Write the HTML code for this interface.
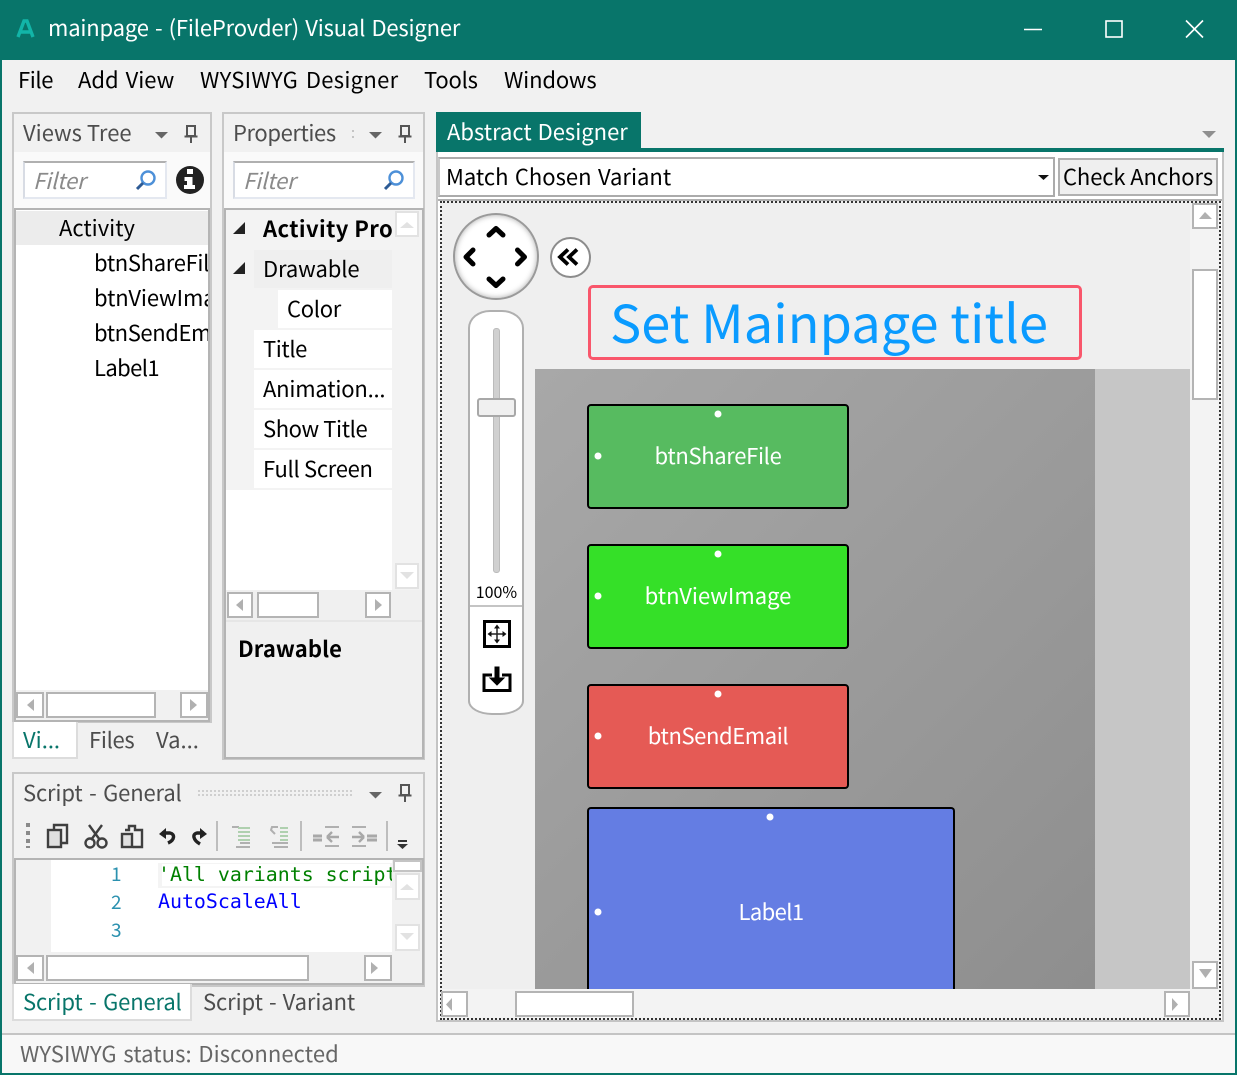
<!DOCTYPE html>
<html><head><meta charset="utf-8"><style>
html,body{margin:0;padding:0}
body{width:1237px;height:1075px;overflow:hidden;position:relative;background:#f1f1f1;font-family:"Noto Sans CJK SC","Liberation Sans",sans-serif;font-size:22px;color:#000}
div{position:absolute;box-sizing:border-box}
.t{white-space:nowrap;line-height:30px;height:30px}
.g{color:#4d4d4d}
.sb{background:#fff;border:2px solid #b4b4b4}
.fb{background:#fff;border:2px solid #e2e2e2}
svg{position:absolute;left:0;top:0}
</style></head><body>
<div style="left:0;top:0;width:1237px;height:60px;background:#08756a"></div>
<div style="left:0;top:60px;width:2px;height:1015px;background:#08756a"></div>
<div style="left:1235px;top:60px;width:2px;height:1015px;background:#08756a"></div>
<div style="left:0;top:1073px;width:1237px;height:2px;background:#08756a"></div>
<div class="t" style="left:48px;top:12px;color:#fff;font-size:22px;letter-spacing:-.18px;word-spacing:1.500px">mainpage - (FileProvder) Visual Designer</div>

<div class="t" style="left:18px;top:64px;letter-spacing:-.4px">File</div>
<div class="t" style="left:78px;top:64px;word-spacing:2px">Add View</div>
<div class="t" style="left:200px;top:64px;letter-spacing:.3px;word-spacing:2.500px">WYSIWYG Designer</div>
<div class="t" style="left:424px;top:64px;letter-spacing:-.2px">Tools</div>
<div class="t" style="left:504px;top:64px;letter-spacing:-.15px">Windows</div>

<!-- Views tree -->
<div style="left:12px;top:112px;width:200px;height:611px;border:2px solid #c8c8c8;background:#f1f1f1"></div>
<div style="left:14px;top:152px;width:196px;height:56px;background:#fafafa"></div>
<div class="t g" style="left:23px;top:117px">Views Tree</div>
<div style="left:23px;top:161px;width:144px;height:38px;background:#fff;border:2px solid #e4e8f0;border-top-color:#b0b0b0;border-left-color:#d8dce4"></div>
<div class="t" style="left:33px;top:165px;color:#8a8a8a;font-style:italic;letter-spacing:-.15px">Filter</div>
<div style="left:14px;top:208px;width:196px;height:514px;border:2px solid #b4b4b4;background:#fff"></div>
<div style="left:16px;top:211px;width:192px;height:34px;background:#ececec"></div>
<div class="t" style="left:59px;top:212px">Activity</div>
<div style="left:16px;top:245px;width:192px;height:140px;overflow:hidden">
<div class="t" style="left:78px;top:2px;letter-spacing:-.33px">btnShareFile</div>
<div class="t" style="left:78px;top:37px;letter-spacing:-.1px">btnViewImage</div>
<div class="t" style="left:78px;top:72px;letter-spacing:-.4px">btnSendEmail</div>
<div class="t" style="left:78px;top:107px;letter-spacing:-.6px">Label1</div>
</div>
<div style="left:16px;top:690px;width:192px;height:30px;background:#f1f1f1"></div>
<div class="sb" style="left:16px;top:692px;width:28px;height:26px"></div>
<div class="sb" style="left:46px;top:692px;width:110px;height:26px"></div>
<div class="sb" style="left:180px;top:692px;width:28px;height:26px"></div>
<div style="left:12px;top:722px;width:66px;height:37px;background:#fff;border:2px solid #dcdcdc;border-top:0"></div>
<div class="t" style="left:23px;top:724px;color:#08756a">Vi...</div>
<div class="t g" style="left:89px;top:724px;letter-spacing:-.3px">Files</div>
<div class="t g" style="left:156px;top:724px">Va...</div>

<!-- Properties -->
<div style="left:222px;top:112px;width:203px;height:648px;border:2px solid #c8c8c8;background:#f1f1f1"></div>
<div style="left:224px;top:152px;width:199px;height:56px;background:#fafafa"></div>
<div class="t g" style="left:233px;top:117px;letter-spacing:-.4px">Properties</div>
<div style="left:233px;top:161px;width:182px;height:38px;background:#fff;border:2px solid #e4e8f0;border-top-color:#b0b0b0;border-left-color:#d8dce4"></div>
<div class="t" style="left:243px;top:165px;color:#8a8a8a;font-style:italic;letter-spacing:-.15px">Filter</div>
<div style="left:224px;top:208px;width:200px;height:551px;border:2px solid #b4b4b4;background:#f0f0f0"></div>
<div style="left:226px;top:210px;width:196px;height:380px;background:#f3f3f3"></div>
<div style="left:226px;top:490px;width:166px;height:100px;background:#fff"></div>
<div class="t" style="left:263px;top:213px;width:129px;overflow:hidden;font-weight:bold;letter-spacing:.4px">Activity Pro</div>
<div style="left:254px;top:250px;width:138px;height:38px;background:#efefef"></div>
<div class="t" style="left:263px;top:253px;letter-spacing:-.1px">Drawable</div>
<div style="left:278px;top:290px;width:114px;height:38px;background:#fff"></div>
<div class="t" style="left:287px;top:293px;letter-spacing:-.3px">Color</div>
<div style="left:254px;top:330px;width:138px;height:38px;background:#fff"></div>
<div class="t" style="left:263px;top:333px;letter-spacing:-.4px">Title</div>
<div style="left:254px;top:370px;width:138px;height:38px;background:#fff"></div>
<div class="t" style="left:263px;top:373px;letter-spacing:-.2px">Animation...</div>
<div style="left:254px;top:410px;width:138px;height:38px;background:#fff"></div>
<div class="t" style="left:263px;top:413px;letter-spacing:-.4px">Show Title</div>
<div style="left:254px;top:450px;width:138px;height:38px;background:#fff"></div>
<div class="t" style="left:263px;top:453px;letter-spacing:-.3px">Full Screen</div>
<div class="fb" style="left:395px;top:211px;width:24px;height:26px"></div>
<div class="fb" style="left:395px;top:563px;width:24px;height:26px"></div>
<div class="sb" style="left:227px;top:592px;width:26px;height:26px"></div>
<div class="sb" style="left:257px;top:592px;width:62px;height:26px"></div>
<div class="sb" style="left:365px;top:592px;width:26px;height:26px"></div>
<div style="left:226px;top:620px;width:196px;height:2px;background:#e6e6e6"></div>
<div class="t" style="left:238px;top:633px;font-weight:bold;letter-spacing:.1px">Drawable</div>

<!-- Script -->
<div style="left:12px;top:772px;width:413px;height:215px;border:2px solid #c8c8c8;background:#f1f1f1"></div>
<div class="t g" style="left:23px;top:777px;letter-spacing:-.15px;word-spacing:1.800px">Script - General</div>
<div style="left:197px;top:789px;width:157px;height:8px;background-image:radial-gradient(#c4c4c4 0.8px,transparent 1px);background-size:4px 4px"></div>
<div style="left:14px;top:858px;width:410px;height:127px;border:2px solid #b4b4b4;background:#f1f1f1"></div>
<div style="left:51px;top:860px;width:341px;height:92px;background:#fff"></div>
<div style="left:158px;top:863px;width:234px;height:25px;background:#f4f4f4"></div>
<div style="left:162px;top:864px;width:228px;height:22px;background:#fff"></div>
<div class="t" style="left:111px;top:859px;font-size:19px;color:#2b91af">1</div>
<div class="t" style="left:111px;top:887px;font-size:19px;color:#2b91af">2</div>
<div class="t" style="left:111px;top:915px;font-size:19px;color:#2b91af">3</div>
<div class="t" style="left:158px;top:861px;width:234px;overflow:hidden;font-family:'DejaVu Sans Mono',monospace;font-size:19.9px;color:#008000;line-height:28px">'All variants script</div>
<div class="t" style="left:158px;top:888px;font-family:'DejaVu Sans Mono',monospace;font-size:19.9px;color:#0000ff;line-height:28px">AutoScaleAll</div>
<div class="sb" style="left:393px;top:860px;width:29px;height:12px;border-color:#c4c4c4"></div>
<div class="fb" style="left:395px;top:873px;width:25px;height:27px"></div>
<div class="fb" style="left:395px;top:924px;width:25px;height:27px"></div>
<div class="sb" style="left:16px;top:955px;width:28px;height:26px"></div>
<div class="sb" style="left:46px;top:955px;width:263px;height:26px"></div>
<div class="sb" style="left:364px;top:955px;width:28px;height:26px"></div>
<div style="left:12px;top:984px;width:180px;height:37px;background:#fff;border:2px solid #dcdcdc;border-top:0"></div>
<div class="t" style="left:23px;top:986px;color:#08756a;letter-spacing:-.15px;word-spacing:1.800px">Script - General</div>
<div class="t g" style="left:203px;top:986px;letter-spacing:-.1px;word-spacing:1.300px">Script - Variant</div>

<!-- Status -->
<div style="left:2px;top:1033px;width:1233px;height:40px;background:#f8f8f8;border-top:2px solid #c4c4c4"></div>
<div class="t" style="left:20px;top:1038px;color:#666;letter-spacing:.1px;word-spacing:1.600px">WYSIWYG status: Disconnected</div>

<!-- Designer -->
<div style="left:436px;top:112px;width:205px;height:40px;background:#08756a"></div>
<div style="left:436px;top:148px;width:788px;height:4px;background:#08756a"></div>
<div class="t" style="left:447px;top:116px;color:#fff;word-spacing:1px">Abstract Designer</div>
<div style="left:436px;top:152px;width:788px;height:870px;background:#fff;border:2px solid #c4c4c4;border-top:0"></div>
<div style="left:438px;top:157px;width:617px;height:40px;background:#fff;border:2px solid #ababab;border-left-color:#c8c8c8"></div>
<div class="t" style="left:446px;top:161px;word-spacing:1.500px">Match Chosen Variant</div>
<div style="left:1058px;top:158px;width:160px;height:38px;background:#efefef;border:2px solid #b0b0b0"></div>
<div class="t" style="left:1063px;top:161px;letter-spacing:-.1px">Check Anchors</div>
<div style="left:438px;top:199px;width:784px;height:2px;background:#b0b0b0"></div>
<div style="left:440px;top:201px;width:781px;height:819px;background:#efefef;border:2px dotted #333"></div>
<div style="left:1190px;top:203px;width:29px;height:786px;background:#f3f3f3"></div>
<div style="left:442px;top:989px;width:777px;height:29px;background:#f3f3f3"></div>
<div class="sb" style="left:1192px;top:203px;width:26px;height:26px"></div>
<div class="sb" style="left:1192px;top:269px;width:26px;height:131px"></div>
<div class="sb" style="left:1192px;top:961px;width:26px;height:28px"></div>
<div class="sb" style="left:441px;top:991px;width:27px;height:26px"></div>
<div class="sb" style="left:515px;top:991px;width:119px;height:26px"></div>
<div class="sb" style="left:1164px;top:991px;width:26px;height:26px"></div>

<div style="left:588px;top:285px;width:494px;height:75px;border:3px solid #f9566b;border-radius:5px"></div>
<div class="t" style="left:610px;top:286px;height:70px;line-height:70px;font-size:52.400px;color:#0a9bff">Set Mainpage title</div>

<div style="left:535px;top:369px;width:655px;height:620px;background:#c6c6c6"></div>
<div style="left:535px;top:369px;width:560px;height:620px;background:linear-gradient(135deg,#a8a8a8,#8e8e8e)"></div>
<div style="left:587px;top:404px;width:262px;height:105px;background:#57bb60;border:2px solid #000;border-radius:4px"></div>
<div style="left:587px;top:544px;width:262px;height:105px;background:#35e028;border:2px solid #000;border-radius:4px"></div>
<div style="left:587px;top:684px;width:262px;height:105px;background:#e55a55;border:2px solid #000;border-radius:4px"></div>
<div style="left:587px;top:807px;width:368px;height:182px;background:#647de3;border:2px solid #000;border-bottom:0;border-radius:4px 4px 0 0"></div>
<div class="t" style="left:587px;top:440px;width:262px;text-align:center;color:#fff;letter-spacing:-.33px">btnShareFile</div>
<div class="t" style="left:587px;top:580px;width:262px;text-align:center;color:#fff">btnViewImage</div>
<div class="t" style="left:587px;top:720px;width:262px;text-align:center;color:#fff;letter-spacing:-.4px">btnSendEmail</div>
<div class="t" style="left:587px;top:896px;width:368px;text-align:center;color:#fff;letter-spacing:-.6px">Label1</div>

<div style="left:453px;top:213px;width:86px;height:87px;border-radius:50%;background:#fff;border:2px solid #9a9a9a;box-shadow:inset 0 0 6px #aaa"></div>
<div style="left:550px;top:237px;width:41px;height:41px;border-radius:50%;background:#fff;border:2px solid #8c8c8c"></div>
<div style="left:468px;top:310px;width:56px;height:405px;background:#fff;border:2px solid #b0b0b0;border-radius:22px 22px 24px 24px / 18px 18px 14px 14px"></div>
<div style="left:493px;top:328px;width:7px;height:245px;background:#d0d0d0;border:1px solid #bbb;border-radius:3px"></div>
<div style="left:477px;top:398px;width:39px;height:19px;background:#f0f0f0;border:2px solid #a8a8a8;border-radius:3px"></div>
<div style="left:470px;top:605px;width:52px;height:2px;background:#c4c4c4"></div>
<div class="t" style="left:470px;top:576px;width:53px;text-align:center;font-size:16px">100%</div>

<svg width="1237" height="1075" viewBox="0 0 1237 1075" xmlns="http://www.w3.org/2000/svg">
<path d="M18 37 L24 21 L27 21 L33 37 M20.5 32 H30.5" fill="none" stroke="#12b5a8" stroke-width="3.4"/>
<g stroke="#fff" fill="none" stroke-width="1.6">
<path d="M1024 29.5H1042"/><rect x="1106" y="21" width="16" height="16"/><path d="M1186 20.5L1203 37.5M1203 20.5L1186 37.5"/>
</g>
<!-- header arrows -->
<g fill="#666"><path d="M155 132h13l-6.500 6.500z"/><path d="M369 132h13l-6.500 6.500z"/><path d="M369 792h13l-6.500 6.500z"/></g>
<path d="M1202 131h14l-7 7z" fill="#8f8f8f"/>
<g fill="none" stroke="#555" stroke-width="2">
<path d="M187 126h8v10h-8zM184.500 136.500h13M191 136.500v6.500"/>
<path d="M401 126h8v10h-8zM398.500 136.500h13M405 136.500v6.500"/>
<path d="M401 785h8v10h-8zM398.500 795.500h13M405 795.500v6.500"/>
</g>
<g fill="#c4c4c4"><rect x="352" y="130" width="2" height="2"/><rect x="352" y="136" width="2" height="2"/></g>
<!-- search icons -->
<g fill="none"><circle cx="148" cy="178" r="6.500" stroke="#4d90d8" stroke-width="2.400"/><path d="M143 183l-6 6" stroke="#2d5b95" stroke-width="3"/>
<circle cx="396" cy="178" r="6.500" stroke="#4d90d8" stroke-width="2.400"/><path d="M391 183l-6 6" stroke="#2d5b95" stroke-width="3"/></g>
<circle cx="190" cy="180" r="14" fill="#222"/>
<path d="M187 169h6v5h-6zM184.500 177h8v8h2.500v4h-11v-4h3v-4h-2.500z" fill="#fff"/>
<!-- tree arrows -->
<path d="M245 222v12h-12z" fill="#222"/><path d="M245 262v12h-12z" fill="#222"/>
<!-- scroll arrows -->
<g fill="#b0b0b0">
<path d="M34 699v12l-7-6z"/><path d="M190 699v12l7-6z"/>
<path d="M243 599v12l-7-6z"/><path d="M375 599v12l7-6z"/>
<path d="M34 962v12l-7-6z"/><path d="M371 962v12l7-6z"/>
<path d="M1199 219l6-7 7 7z"/><path d="M1199 969h13l-6.500 9z"/>
<path d="M452 998v13l-6-6.500z"/><path d="M1172 998v13l6-6.500z"/>
</g>
<g fill="#e2e2e2">
<path d="M400 228l7-6 7 6z"/><path d="M400 572h14l-7 7z"/>
<path d="M400 890l7-6 7 6z"/><path d="M400 933h14l-7 7z"/>
</g>
<!-- toolbar -->
<g fill="#8a8a8a"><rect x="26" y="823" width="4" height="4"/><rect x="26" y="831" width="4" height="4"/><rect x="26" y="839" width="4" height="4"/><rect x="26" y="846" width="4" height="2"/></g>
<g fill="none" stroke="#3f3f3f" stroke-width="2.400">
<rect x="48" y="830" width="13" height="17" fill="#e0e0e0"/><path d="M54 829v-4h13v18h-5"/>
<path d="M89 825l11 15M102 825l-11 15"/><circle cx="90" cy="843" r="4.500"/><circle cx="102" cy="843" r="4.500"/>
<rect x="122" y="834" width="10" height="13" fill="#e0e0e0"/><path d="M125 830h4v-4h6v4h7v17h-9"/>
</g>
<g fill="none" stroke="#222" stroke-width="3.400">
<path d="M162 833h8c5 1 5 7 -2 10"/><path d="M204 833h-7c-5 1-4 7 3 11"/>
</g>
<path d="M159 834l7-6v11z" fill="#222"/><path d="M207 834l-7-6v11z" fill="#222"/>
<g fill="#bdbdbd"><rect x="216" y="821" width="2" height="30"/><rect x="300" y="821" width="2" height="30"/><rect x="386" y="821" width="2" height="30"/></g>
<g fill="none" stroke="#b0b0b0" stroke-width="2">
<path d="M232 827h7M240 843h10M236 847h14"/><path d="M272 843h16M274 847h14"/><path d="M278 827h-6l-1 3 4 4"/>
<path d="M325 827h14M325 846h14"/><path d="M352 827h14M352 846h14"/>
<path d="M313 836h9M313 840h9M367 836h10M367 840h10" stroke-width="3" stroke="#a8a8a8"/>
</g>
<g fill="none" stroke="#afd0af" stroke-width="2"><path d="M238 828h12M238 832h12M238 836h12M238 840h12"/><path d="M280 828h8M280 832h8M280 836h8M280 840h8"/></g>
<path d="M339 837h-12M327 837l5-5M327 837l5 5M352 837h12M364 837l-5-5M364 837l-5 5" fill="none" stroke="#a8a8a8" stroke-width="2.400"/>
<path d="M398 840h9v2h-9zM397 844h11l-5.500 5z" fill="#333"/>
<!-- combo arrow -->
<path d="M1038 175h11l-5.500 5z" fill="#111"/>
<!-- nav arrows -->
<g fill="none" stroke="#000" stroke-width="5" stroke-linecap="round" stroke-linejoin="round">
<path d="M489 235l7-6.500 7 6.500"/><path d="M489 279l7 6.500 7-6.500"/><path d="M473 250l-7 7 7 7"/><path d="M517.500 250l7 7-7 7"/>
<path d="M568 249.500l-8 7.500 8 7.500M577 249.500l-8 7.500 8 7.500" stroke-width="3.800" stroke-linecap="butt" stroke-linejoin="miter"/>
</g>
<!-- slider icons -->
<rect x="484.500" y="621.500" width="25" height="25" fill="none" stroke="#000" stroke-width="3"/>
<path d="M497 626v16M489 634h16" stroke="#222" stroke-width="1.500"/>
<path d="M497 624.500l-3 4h6zM497 643.500l-3-4h6zM487.500 634l4-3v6zM506.500 634l-4-3v6z" fill="#111"/>
<path d="M492 675h-8v15.500h26V675h-8" fill="none" stroke="#000" stroke-width="3"/>
<path d="M495 667h4v11h5l-7 7-7-7h5z" fill="#000" stroke="#000" stroke-width="1"/>
<!-- anchor dots -->
<g fill="#fff">
<circle cx="718" cy="414" r="3.500"/><circle cx="598" cy="456" r="3.500"/>
<circle cx="718" cy="554" r="3.500"/><circle cx="598" cy="596" r="3.500"/>
<circle cx="718" cy="694" r="3.500"/><circle cx="598" cy="736" r="3.500"/>
<circle cx="770" cy="817" r="3.500"/><circle cx="598" cy="912" r="3.500"/>
</g>
</svg>
</body></html>
